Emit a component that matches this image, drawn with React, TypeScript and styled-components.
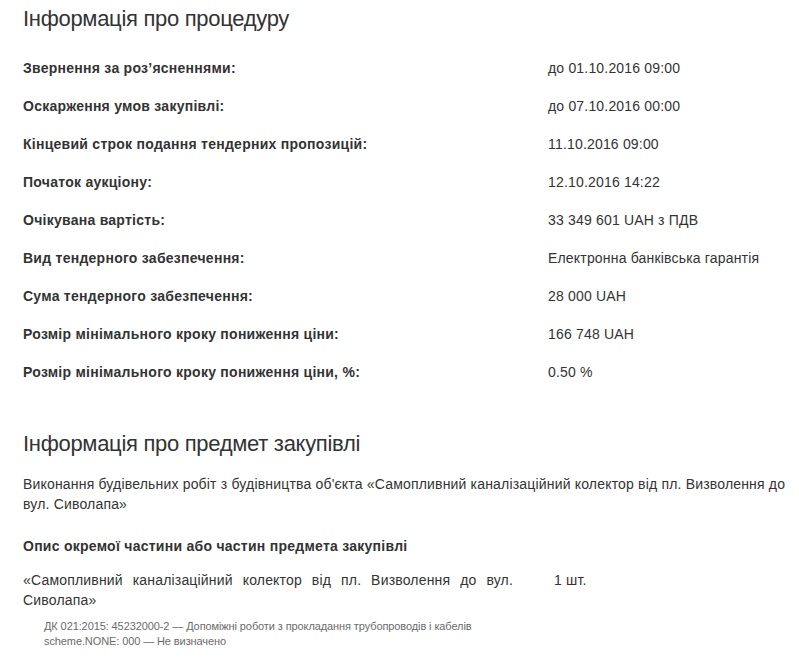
import styled, { createGlobalStyle } from "styled-components";

const GlobalStyle = createGlobalStyle`
  html, body {
    margin: 0;
    padding: 0;
    background: #fff;
  }
  body {
    font-family: "Liberation Sans", Arial, sans-serif;
    font-size: 14px;
    line-height: 20px;
    letter-spacing: 0.18px;
    color: #333;
  }
`;

const Page = styled.div`
  padding: 5px 8px 20px 23px;
`;

const Section = styled.section`
  & + & {
    margin-top: 39px;
  }
`;

const Title = styled.h3`
  margin: 0;
  padding-top: 1px;
  font-size: 22px;
  line-height: 26px;
  font-weight: 400;
  letter-spacing: -0.3px;
  color: #333;
`;

const InfoList = styled.div`
  margin-top: 17px;
  display: flex;
  flex-direction: column;
`;

const InfoRow = styled.div`
  display: grid;
  grid-template-columns: 525px 1fr;
  padding: 9px 0;
`;

const Label = styled.div`
  font-weight: 700;
  letter-spacing: 0.26px;
`;

const Value = styled.div``;

const Description = styled.p`
  margin: 17px 0 0;
`;

const SubTitle = styled.h5`
  margin: 22px 0 0;
  font-size: 14px;
  line-height: 20px;
  font-weight: 700;
  letter-spacing: 0.26px;
`;

const Item = styled.div`
  margin-top: 14px;
  display: grid;
  grid-template-columns: 490px auto;
  column-gap: 41px;
  align-items: start;
`;

const ItemText = styled.div`
  text-align: justify;
`;

const Quantity = styled.div``;

const Classifiers = styled.div`
  margin-top: 9px;
  padding-left: 21px;
  font-size: 11px;
  line-height: 15px;
  letter-spacing: -0.1px;
  color: #6b6b6b;
`;

const procedure = [
  ["Звернення за роз’ясненнями:", "до 01.10.2016 09:00"],
  ["Оскарження умов закупівлі:", "до 07.10.2016 00:00"],
  ["Кінцевий строк подання тендерних пропозицій:", "11.10.2016 09:00"],
  ["Початок аукціону:", "12.10.2016 14:22"],
  ["Очікувана вартість:", "33 349 601 UAH з ПДВ"],
  ["Вид тендерного забезпечення:", "Електронна банківська гарантія"],
  ["Сума тендерного забезпечення:", "28 000 UAH"],
  ["Розмір мінімального кроку пониження ціни:", "166 748 UAH"],
  ["Розмір мінімального кроку пониження ціни, %:", "0.50 %"],
];

export default function App() {
  return (
    <>
      <GlobalStyle />
      <Page>
        <Section>
          <Title>Інформація про процедуру</Title>
          <InfoList>
            {procedure.map(([label, value]) => (
              <InfoRow key={label}>
                <Label>{label}</Label>
                <Value>{value}</Value>
              </InfoRow>
            ))}
          </InfoList>
        </Section>
        <Section>
          <Title>Інформація про предмет закупівлі</Title>
          <Description>
            Виконання будівельних робіт з будівництва об'єкта «Самопливний
            каналізаційний колектор від пл. Визволення до вул. Сиволапа»
          </Description>
          <SubTitle>Опис окремої частини або частин предмета закупівлі</SubTitle>
          <Item>
            <ItemText>
              «Самопливний каналізаційний колектор від пл. Визволення до вул.
              Сиволапа»
            </ItemText>
            <Quantity>1 шт.</Quantity>
          </Item>
          <Classifiers>
            <div>
              ДК 021:2015: 45232000-2 — Допоміжні роботи з прокладання
              трубопроводів і кабелів
            </div>
            <div>scheme.NONE: 000 — Не визначено</div>
          </Classifiers>
        </Section>
      </Page>
    </>
  );
}
